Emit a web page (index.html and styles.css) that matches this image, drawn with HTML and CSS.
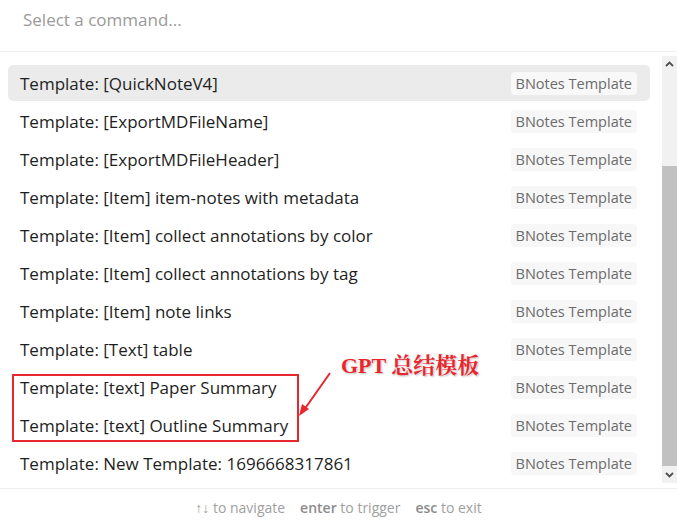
FILE: index.html
```html
<!DOCTYPE html>
<html>
<head>
<meta charset="utf-8">
<link rel="stylesheet" href="styles.css">
</head>
<body>
<div class="prompt">
  <div class="input-wrap">
    <input class="prompt-input" type="text" placeholder="Select a command...">
  </div>
  <div class="results-wrap">
    <div class="results">
      <div class="item selected"><span class="label">Template: [QuickNoteV4]</span><span class="badge">BNotes Template</span></div>
      <div class="item"><span class="label">Template: [ExportMDFileName]</span><span class="badge">BNotes Template</span></div>
      <div class="item"><span class="label">Template: [ExportMDFileHeader]</span><span class="badge">BNotes Template</span></div>
      <div class="item"><span class="label">Template: [Item] item-notes with metadata</span><span class="badge">BNotes Template</span></div>
      <div class="item"><span class="label">Template: [Item] collect annotations by color</span><span class="badge">BNotes Template</span></div>
      <div class="item"><span class="label">Template: [Item] collect annotations by tag</span><span class="badge">BNotes Template</span></div>
      <div class="item"><span class="label">Template: [Item] note links</span><span class="badge">BNotes Template</span></div>
      <div class="item"><span class="label">Template: [Text] table</span><span class="badge">BNotes Template</span></div>
      <div class="item"><span class="label">Template: [text] Paper Summary</span><span class="badge">BNotes Template</span></div>
      <div class="item"><span class="label">Template: [text] Outline Summary</span><span class="badge">BNotes Template</span></div>
      <div class="item"><span class="label">Template: New Template: 1696668317861</span><span class="badge">BNotes Template</span></div>
    </div>
    <div class="scrollbar">
      <div class="sb-btn"><svg width="15" height="17" viewBox="0 0 15 17"><path d="M4 10 L7.5 6.5 L11 10" fill="none" stroke="#505050" stroke-width="1.8"/></svg></div>
      <div class="sb-track">
        <div class="sb-space"></div>
        <div class="sb-thumb"></div>
      </div>
      <div class="sb-btn"><svg width="15" height="17" viewBox="0 0 15 17"><path d="M4 7 L7.5 10.5 L11 7" fill="none" stroke="#505050" stroke-width="1.8"/></svg></div>
    </div>
    <div class="annot-box"></div>
    <div class="annot-text">GPT 总结模板</div>
    <svg class="annot-arrow" width="40" height="50" viewBox="0 0 40 50">
      <path d="M34 3 L8 40" stroke="#e8262d" stroke-width="2" fill="none"/>
      <path d="M3 46 L6 34 L13 39 Z" fill="#e8262d"/>
    </svg>
  </div>
  <div class="footer">
    <span class="hint">↑↓ to navigate</span>
    <span class="hint"><b>enter</b> to trigger</span>
    <span class="hint"><b>esc</b> to exit</span>
  </div>
</div>
</body>
</html>
```

FILE: styles.css
```css
* { box-sizing: border-box; }
html, body {
  margin: 0;
  padding: 0;
  background: #ffffff;
}
body {
  font-family: "Open Sans", "Noto Sans", sans-serif;
  color: #222222;
  width: 677px;
  height: 522px;
  overflow: hidden;
}
.prompt {
  display: flex;
  flex-direction: column;
  height: 522px;
}
.input-wrap {
  height: 52px;
  border-bottom: 1px solid #efefef;
  display: flex;
  align-items: center;
}
.prompt-input {
  border: none;
  outline: none;
  background: transparent;
  font-family: inherit;
  font-size: 17px;
  color: #222;
  padding: 0 0 12px 23px;
  width: 100%;
  height: 42px;
}
.prompt-input::placeholder {
  color: #9a9a9a;
}
.results-wrap {
  position: relative;
  height: 437px;
  border-bottom: 1px solid #efefef;
  display: flex;
}
.results {
  flex: 1;
  display: flex;
  flex-direction: column;
  gap: 2px;
  padding: 13px 12px 0 8px;
}
.item {
  height: 36px;
  display: flex;
  align-items: center;
  justify-content: space-between;
  padding: 0 13px 0 12px;
  border-radius: 5px;
  font-size: 17px;
  color: #1e1e1e;
}
.item.selected {
  background: #ebebeb;
}
.label {
  padding-top: 1px;
}
.badge {
  font-size: 14.5px;
  color: #6b6b6b;
  background: #f7f7f7;
  border-radius: 4px;
  height: 23px;
  line-height: 23px;
  padding: 0 5px;
}
.item.selected .badge {
  background: #f8f8f8;
}
.scrollbar {
  width: 15px;
  margin: 4px 0 5px 0;
  display: flex;
  flex-direction: column;
  background: #f1f1f1;
}
.sb-btn {
  height: 17px;
  display: flex;
}
.sb-track {
  flex: 1;
  display: flex;
  flex-direction: column;
}
.sb-space {
  height: 93px;
}
.sb-thumb {
  flex: 1;
  background: #c1c1c1;
}
.annot-box {
  position: absolute;
  left: 12px;
  top: 322px;
  width: 287px;
  height: 68px;
  border: 2px solid #e8262d;
}
.annot-text {
  position: absolute;
  left: 341px;
  top: 296px;
  font-family: "Liberation Serif", "Noto Serif CJK SC", "Noto Sans CJK SC", serif;
  font-weight: bold;
  font-size: 22px;
  color: #e8262d;
  text-shadow: 0 0 2px #fff, 1px 1px 2px #b0b0b0;
  white-space: nowrap;
}
.annot-arrow {
  position: absolute;
  left: 296px;
  top: 318px;
}
.footer {
  flex: 1;
  display: flex;
  justify-content: center;
  align-items: center;
  gap: 15px;
  font-size: 14px;
  color: #a0a0a0;
  padding-top: 4px;
}
.hint b {
  font-weight: 600;
  color: #8c8c8c;
}
```
